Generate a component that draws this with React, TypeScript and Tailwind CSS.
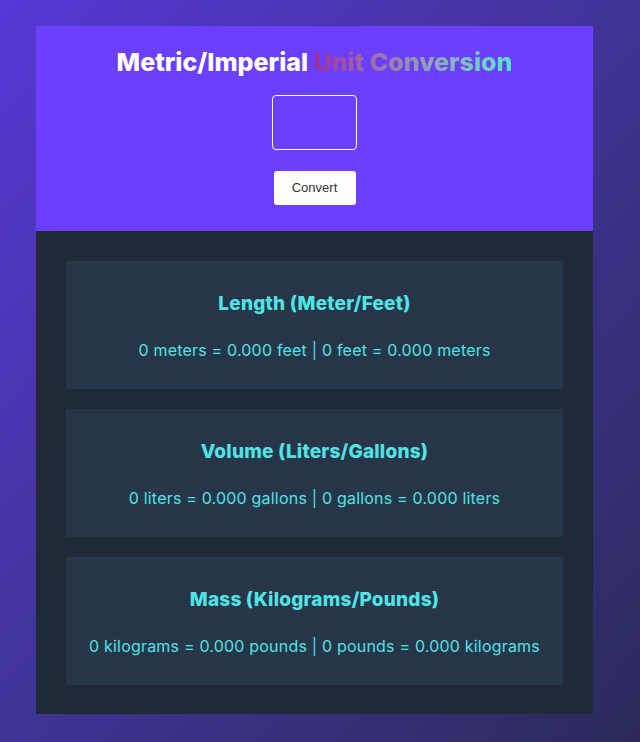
import React, { useState } from 'react';

type Row = { title: string; text: string };

const App: React.FC = () => {
  const [value, setValue] = useState('');
  const [num, setNum] = useState(0);

  const rows: Row[] = [
    {
      title: 'Length (Meter/Feet)',
      text: `${num} meters = ${(num * 3.281).toFixed(3)} feet | ${num} feet = ${(num / 3.281).toFixed(3)} meters`,
    },
    {
      title: 'Volume (Liters/Gallons)',
      text: `${num} liters = ${(num * 0.264).toFixed(3)} gallons | ${num} gallons = ${(num / 0.264).toFixed(3)} liters`,
    },
    {
      title: 'Mass (Kilograms/Pounds)',
      text: `${num} kilograms = ${(num * 2.204).toFixed(3)} pounds | ${num} pounds = ${(num / 2.204).toFixed(3)} kilograms`,
    },
  ];

  return (
    <div className="min-h-screen bg-gradient-to-br from-[#5737d6] to-[#2b2a5a] pt-[26px] pl-[36px] font-['Inter',sans-serif]">
      <main className="w-[557px]">
        <section className="bg-[#6a40fe] flex flex-col items-center pt-[18px] pb-[26px]">
          <h1 className="h-[36px] leading-[36px] text-[25px] font-extrabold text-white tracking-[0px]">
            Metric/Imperial{' '}
            <span className="bg-gradient-to-r from-[#a12a96] to-[#4ceac6] bg-clip-text text-transparent">
              Unit Conversion
            </span>
          </h1>
          <input
            value={value}
            onChange={(e) => setValue(e.target.value)}
            className="mt-[15px] w-[85px] h-[55px] bg-transparent border border-white rounded-[4px] text-white text-center text-xl outline-none"
          />
          <button
            onClick={() => setNum(Number(value) || 0)}
            className="mt-[21px] w-[82px] h-[34px] bg-white rounded-[3px] text-[13px] text-[#333] font-['Liberation_Sans',sans-serif]"
          >
            Convert
          </button>
        </section>
        <section className="bg-[#1f2937] pt-[30px] px-[30px] pb-[29px] flex flex-col gap-[20px]">
          {rows.map((r) => (
            <div key={r.title} className="h-[128px] bg-[#273549] flex flex-col items-center pt-[30px]">
              <h2 className="text-[19px] leading-[26px] font-extrabold tracking-[0.2px] text-[#4fe4e6]">{r.title}</h2>
              <p className="mt-[21px] text-[16px] leading-[24px] tracking-[0.2px] text-[#4fe4e6]">{r.text}</p>
            </div>
          ))}
        </section>
      </main>
    </div>
  );
};

export default App;
